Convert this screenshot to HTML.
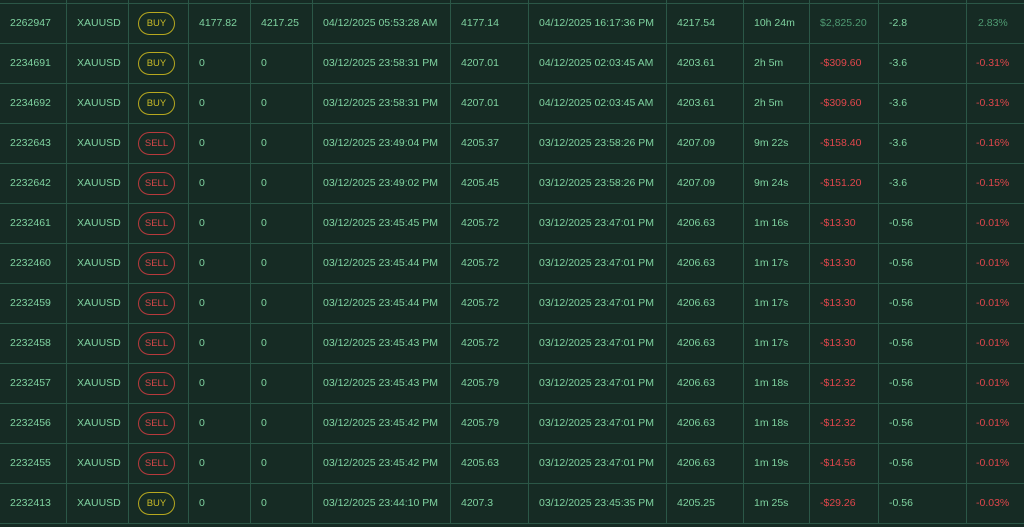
<!DOCTYPE html>
<html><head><meta charset="utf-8"><style>
body{margin:0;width:1024px;height:527px;background:#162b24;overflow:hidden;font-family:"Liberation Sans",sans-serif;font-size:10.5px;color:#7fd3a0}
.t{position:absolute;left:0;top:3px;width:1024px}
.r{position:relative;height:40px;border-top:1px solid #2b5747;box-sizing:border-box}
.r:last-child{border-bottom:1px solid #2b5747;height:41px}
.c{position:absolute;top:0;height:40px;line-height:39px;white-space:nowrap}
.v{position:absolute;top:-3px;width:1px;height:527px;background:#2b5747}
.p{position:absolute;left:138px;top:8px;width:37px;height:23px;box-sizing:border-box;border-radius:12px;border:1.3px solid;display:flex;align-items:center;justify-content:center;font-size:9.5px;line-height:1}
.buy{color:#c9bb28;border-color:#b7a81f}
.sell{color:#d5474a;border-color:#b73a3c}
.red{color:#e0464b}.dim{color:#4f9a72}
</style></head><body>
<div class="v" style="left:66px"></div><div class="v" style="left:128px"></div><div class="v" style="left:188px"></div><div class="v" style="left:250px"></div><div class="v" style="left:312px"></div><div class="v" style="left:450px"></div><div class="v" style="left:528px"></div><div class="v" style="left:666px"></div><div class="v" style="left:743px"></div><div class="v" style="left:809px"></div><div class="v" style="left:878px"></div><div class="v" style="left:966px"></div>
<div class="t" id="t"></div>
<script>
var d=[
["2262947","B","4177.82","4217.25","04/12/2025 05:53:28 AM","4177.14","04/12/2025 16:17:36 PM","4217.54","10h 24m","$2,825.20","-2.8","2.83%",1],
["2234691","B","0","0","03/12/2025 23:58:31 PM","4207.01","04/12/2025 02:03:45 AM","4203.61","2h 5m","-$309.60","-3.6","-0.31%"],
["2234692","B","0","0","03/12/2025 23:58:31 PM","4207.01","04/12/2025 02:03:45 AM","4203.61","2h 5m","-$309.60","-3.6","-0.31%"],
["2232643","S","0","0","03/12/2025 23:49:04 PM","4205.37","03/12/2025 23:58:26 PM","4207.09","9m 22s","-$158.40","-3.6","-0.16%"],
["2232642","S","0","0","03/12/2025 23:49:02 PM","4205.45","03/12/2025 23:58:26 PM","4207.09","9m 24s","-$151.20","-3.6","-0.15%"],
["2232461","S","0","0","03/12/2025 23:45:45 PM","4205.72","03/12/2025 23:47:01 PM","4206.63","1m 16s","-$13.30","-0.56","-0.01%"],
["2232460","S","0","0","03/12/2025 23:45:44 PM","4205.72","03/12/2025 23:47:01 PM","4206.63","1m 17s","-$13.30","-0.56","-0.01%"],
["2232459","S","0","0","03/12/2025 23:45:44 PM","4205.72","03/12/2025 23:47:01 PM","4206.63","1m 17s","-$13.30","-0.56","-0.01%"],
["2232458","S","0","0","03/12/2025 23:45:43 PM","4205.72","03/12/2025 23:47:01 PM","4206.63","1m 17s","-$13.30","-0.56","-0.01%"],
["2232457","S","0","0","03/12/2025 23:45:43 PM","4205.79","03/12/2025 23:47:01 PM","4206.63","1m 18s","-$12.32","-0.56","-0.01%"],
["2232456","S","0","0","03/12/2025 23:45:42 PM","4205.79","03/12/2025 23:47:01 PM","4206.63","1m 18s","-$12.32","-0.56","-0.01%"],
["2232455","S","0","0","03/12/2025 23:45:42 PM","4205.63","03/12/2025 23:47:01 PM","4206.63","1m 19s","-$14.56","-0.56","-0.01%"],
["2232413","B","0","0","03/12/2025 23:44:10 PM","4207.3","03/12/2025 23:45:35 PM","4205.25","1m 25s","-$29.26","-0.56","-0.03%"]];
var xs=[10,77,0,199,261,323,461,539,677,754,820,889,978],h="";
d.forEach(function(r){h+='<div class="r"><div class="c" style="left:10px">'+r[0]+'</div><div class="c" style="left:77px">XAUUSD</div>';
h+=r[1]=="B"?'<div class="p buy">BUY</div>':'<div class="p sell">SELL</div>';
for(var i=2;i<12;i++){var cl=(i==9||i==11)?(r[12]?"dim":"red"):"";var l=i==11?(r[12]?978:976):xs[i+1];h+='<div class="c '+cl+'" style="left:'+l+'px">'+r[i]+'</div>';}
h+='</div>';});
document.getElementById("t").innerHTML=h;
</script>
</body></html>
